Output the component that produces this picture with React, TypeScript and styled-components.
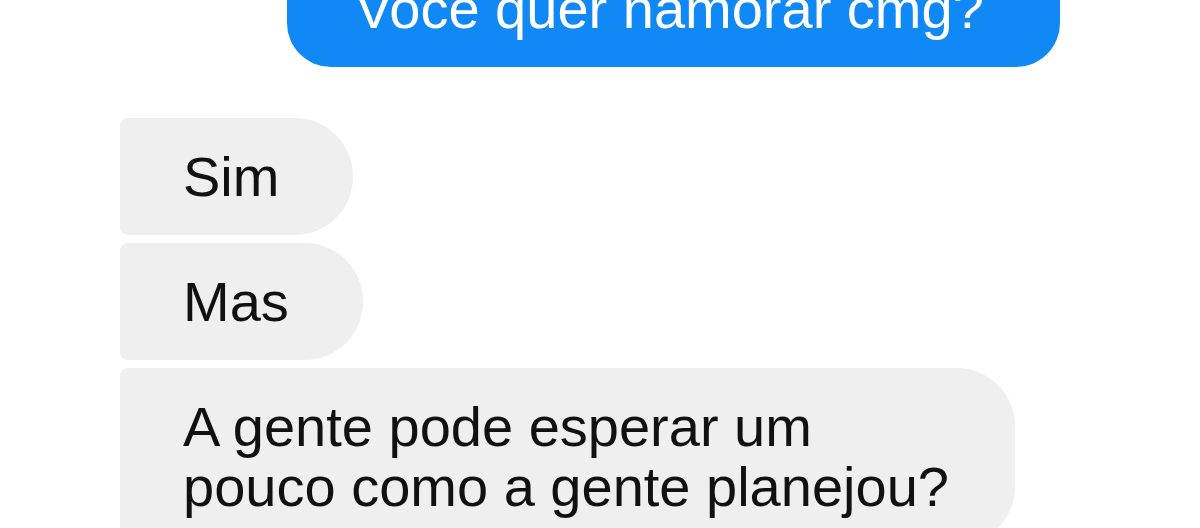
import styled, { createGlobalStyle } from 'styled-components';

const GlobalStyle = createGlobalStyle`
  html, body {
    margin: 0;
    padding: 0;
    background: #ffffff;
    overflow: hidden;
  }
`;

const Chat = () => {
  return (
    <>
      <GlobalStyle />
      <Container>
        <SentRow>
          <SentBubble>Voce quer namorar cmg?</SentBubble>
        </SentRow>
        <ReceivedGroup>
          <ReceivedBubble>Sim</ReceivedBubble>
          <ReceivedBubble>Mas</ReceivedBubble>
          <ReceivedBubble $wide>
            A gente pode esperar um
            <br />
            pouco como a gente planejou?
          </ReceivedBubble>
        </ReceivedGroup>
      </Container>
    </>
  );
};

export default Chat; /*



*/ // Styling

const Container = styled.div`
  display: flex;
  flex-direction: column;
  margin-top: -50px;
  font-family: 'Liberation Sans', Arial, sans-serif;
  font-size: 56px;
  line-height: 60px;
  white-space: nowrap;
`;

const SentRow = styled.div`
  display: flex;
  padding-left: 287px;
  margin-bottom: 51px;
`;

const SentBubble = styled.div`
  width: 773px;
  box-sizing: border-box;
  padding: 29px 68px 28px;
  background-color: #1088f5;
  color: #ffffff;
  border-radius: 44px;
`;

const ReceivedGroup = styled.div`
  display: flex;
  flex-direction: column;
  align-items: flex-start;
  gap: 8px;
  padding-left: 120px;
`;

const ReceivedBubble = styled.div<{ $wide?: boolean }>`
  box-sizing: border-box;
  width: ${(p) => (p.$wide ? '895px' : 'auto')};
  padding: 29px 74px 28px 63px;
  background-color: #efefef;
  color: #111111;
  border-radius: 8px 58px 58px 8px;
`;
